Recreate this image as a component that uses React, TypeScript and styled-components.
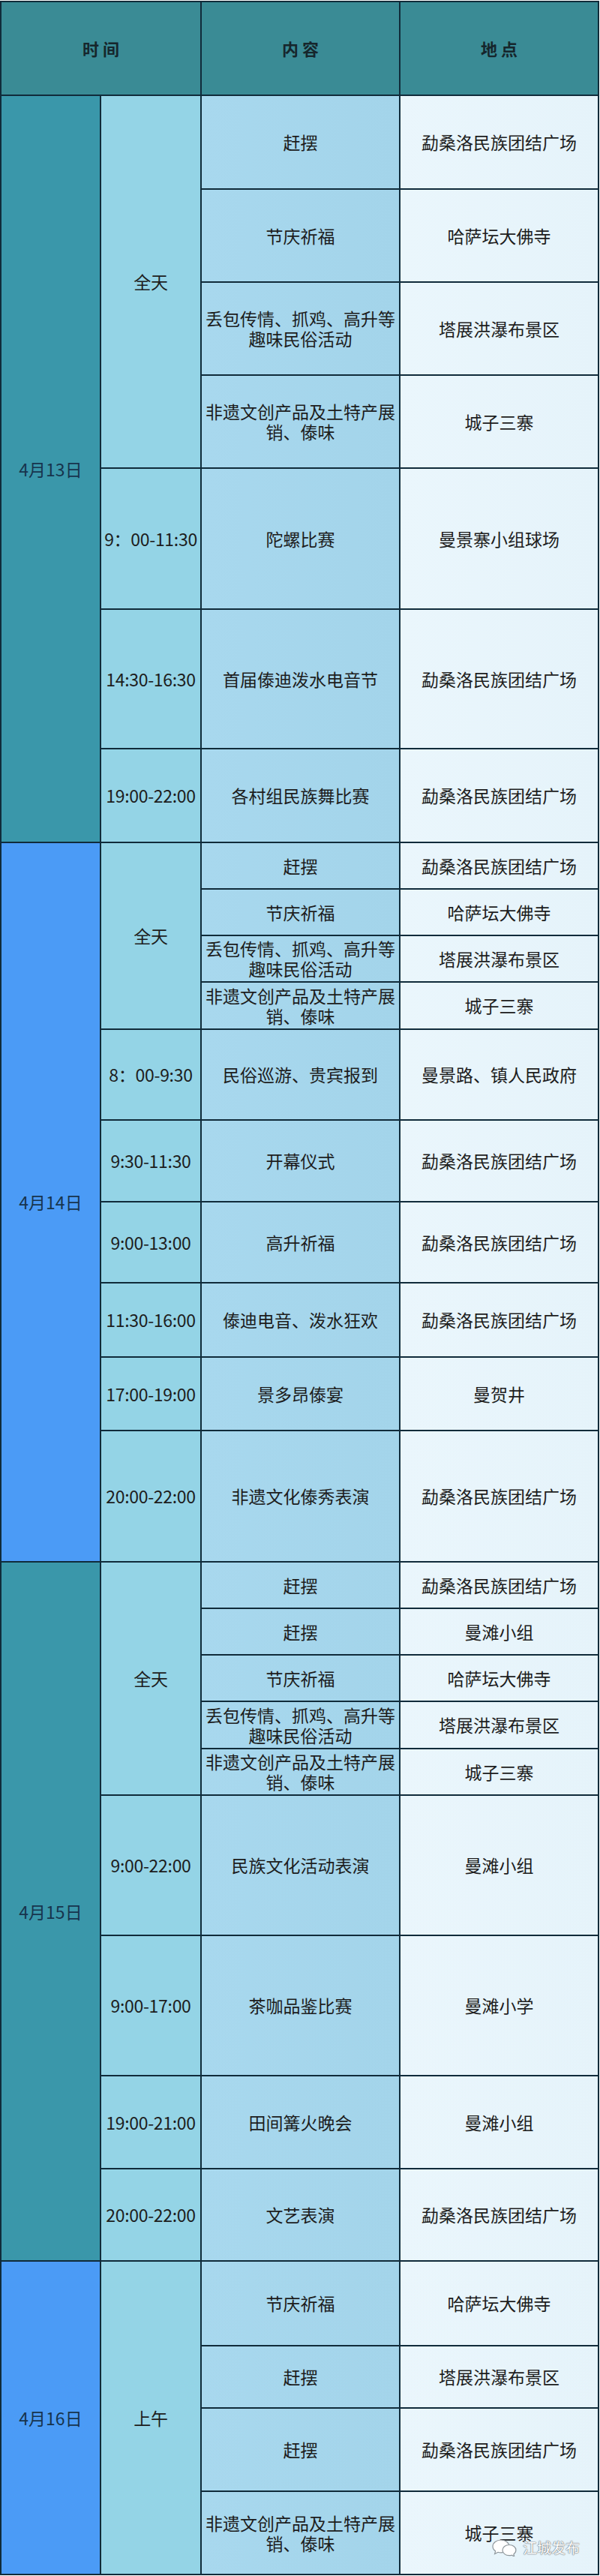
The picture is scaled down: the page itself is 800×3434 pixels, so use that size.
import React from "react";
import styled, { createGlobalStyle } from "styled-components";

const GlobalStyle = createGlobalStyle`
  html, body {
    margin: 0;
    padding: 0;
    background: #ffffff;
  }
  body {
    font-family: "Noto Sans CJK SC", "Noto Sans", sans-serif;
  }
`;

type Row = { content: string; place: string; h: number };
type Slot = { time: string; rows: Row[] };
type Section = { date: string; tone: "teal" | "blue"; slots: Slot[] };

const FEI_YI = "非遗文创产品及土特产展\n销、傣味";
const DIU_BAO = "丢包传情、抓鸡、高升等\n趣味民俗活动";
const MENG = "勐桑洛民族团结广场";

const sections: Section[] = [
  {
    date: "4月13日",
    tone: "teal",
    slots: [
      {
        time: "全天",
        rows: [
          { content: "赶摆", place: MENG, h: 125 },
          { content: "节庆祈福", place: "哈萨坛大佛寺", h: 124 },
          { content: DIU_BAO, place: "塔展洪瀑布景区", h: 124 },
          { content: FEI_YI, place: "城子三寨", h: 124 },
        ],
      },
      { time: "9：00-11:30", rows: [{ content: "陀螺比赛", place: "曼景寨小组球场", h: 188 }] },
      { time: "14:30-16:30", rows: [{ content: "首届傣迪泼水电音节", place: MENG, h: 186 }] },
      { time: "19:00-22:00", rows: [{ content: "各村组民族舞比赛", place: MENG, h: 125 }] },
    ],
  },
  {
    date: "4月14日",
    tone: "blue",
    slots: [
      {
        time: "全天",
        rows: [
          { content: "赶摆", place: MENG, h: 62 },
          { content: "节庆祈福", place: "哈萨坛大佛寺", h: 62 },
          { content: DIU_BAO, place: "塔展洪瀑布景区", h: 62 },
          { content: FEI_YI, place: "城子三寨", h: 63 },
        ],
      },
      { time: "8：00-9:30", rows: [{ content: "民俗巡游、贵宾报到", place: "曼景路、镇人民政府", h: 121 }] },
      { time: "9:30-11:30", rows: [{ content: "开幕仪式", place: MENG, h: 109 }] },
      { time: "9:00-13:00", rows: [{ content: "高升祈福", place: MENG, h: 108 }] },
      { time: "11:30-16:00", rows: [{ content: "傣迪电音、泼水狂欢", place: MENG, h: 99 }] },
      { time: "17:00-19:00", rows: [{ content: "景多昂傣宴", place: "曼贺井", h: 98 }] },
      { time: "20:00-22:00", rows: [{ content: "非遗文化傣秀表演", place: MENG, h: 175 }] },
    ],
  },
  {
    date: "4月15日",
    tone: "teal",
    slots: [
      {
        time: "全天",
        rows: [
          { content: "赶摆", place: MENG, h: 62 },
          { content: "赶摆", place: "曼滩小组", h: 62 },
          { content: "节庆祈福", place: "哈萨坛大佛寺", h: 62 },
          { content: DIU_BAO, place: "塔展洪瀑布景区", h: 63 },
          { content: FEI_YI, place: "城子三寨", h: 62 },
        ],
      },
      { time: "9:00-22:00", rows: [{ content: "民族文化活动表演", place: "曼滩小组", h: 187 }] },
      { time: "9:00-17:00", rows: [{ content: "茶咖品鉴比赛", place: "曼滩小学", h: 187 }] },
      { time: "19:00-21:00", rows: [{ content: "田间篝火晚会", place: "曼滩小组", h: 124 }] },
      { time: "20:00-22:00", rows: [{ content: "文艺表演", place: MENG, h: 123 }] },
    ],
  },
  {
    date: "4月16日",
    tone: "blue",
    slots: [
      {
        time: "上午",
        rows: [
          { content: "节庆祈福", place: "哈萨坛大佛寺", h: 113 },
          { content: "赶摆", place: "塔展洪瀑布景区", h: 83 },
          { content: "赶摆", place: MENG, h: 111 },
          { content: FEI_YI, place: "城子三寨", h: 111 },
        ],
      },
    ],
  },
];

const LINE = 2;
const HEADER_H = 125;

const COLORS = {
  header: "#3a8b95",
  teal: "#3a97aa",
  blue: "#4b9bf6",
  time: "#94d4e6",
};

const Wrapper = styled.div`
  position: relative;
  width: 799px;
  margin-top: 1px;
`;

const Table = styled.div<{ $rows: string }>`
  display: grid;
  grid-template-columns: 131px 132px 263px 263px;
  grid-template-rows: ${(p) => p.$rows};
  gap: ${LINE}px;
  padding: ${LINE}px;
  background: #102b3a;
`;

const Cell = styled.div<{ $row: number; $span?: number; $col: number; $colSpan?: number }>`
  grid-column: ${(p) => p.$col} / span ${(p) => p.$colSpan ?? 1};
  grid-row: ${(p) => p.$row} / span ${(p) => p.$span ?? 1};
  display: flex;
  align-items: center;
  justify-content: center;
  text-align: center;
  color: #1d1d1d;
  font-size: 23px;
  line-height: 27px;
  white-space: pre-line;
  overflow: hidden;
`;

const HeaderCell = styled(Cell)`
  background: ${COLORS.header};
  font-weight: 700;
  font-size: 22px;
  color: #16262c;
`;

const DateCell = styled(Cell)<{ $tone: "teal" | "blue" }>`
  background: ${(p) => COLORS[p.$tone]};
  color: #17344d;
`;

const TimeCell = styled(Cell)`
  background: ${COLORS.time};
  white-space: nowrap;
  letter-spacing: -0.3px;
`;

const ContentCell = styled(Cell)`
  background: linear-gradient(90deg, #a8d8ee 0%, #a3d4ea 100%);
`;

const PlaceCell = styled(Cell)`
  background: linear-gradient(90deg, #eaf6fc 0%, #e5f3fa 100%);
`;

const Watermark = styled.div`
  position: absolute;
  right: 26px;
  bottom: 24px;
  display: flex;
  align-items: center;
  gap: 6px;
  font-size: 19px;
  color: #ffffff;
  text-shadow: 0 0 1px #6d7479, 0 0 1px #6d7479, 0 0 2px #8a9094;
`;

function WeChatIcon() {
  return (
    <svg width="36" height="24" viewBox="0 0 36 24">
      <g fill="#ffffff" stroke="#8e969b" strokeWidth="1.2">
        <path d="M13 2c-6 0-11 3.8-11 8.5 0 2.6 1.4 4.8 3.6 6.3L4.6 20.6l4.4-2.3c1.3.4 2.6.6 4 .6 6 0 11-3.8 11-8.4S19 2 13 2z" />
        <path d="M24 8.5c-5 0-9 3.2-9 7.1s4 7.1 9 7.1c1.1 0 2.2-.2 3.2-.5l3.6 1.8-.9-3.1c1.8-1.3 3-3.2 3-5.3 0-3.9-4-7.1-8.9-7.1z" />
      </g>
    </svg>
  );
}

export default function App() {
  const heights: number[] = [HEADER_H - LINE];
  const cells: React.ReactNode[] = [
    <HeaderCell key="h1" $row={1} $col={1} $colSpan={2}>
      时 间
    </HeaderCell>,
    <HeaderCell key="h2" $row={1} $col={3}>
      内 容
    </HeaderCell>,
    <HeaderCell key="h3" $row={1} $col={4}>
      地 点
    </HeaderCell>,
  ];
  let row = 2;

  sections.forEach((sec, si) => {
    const total = sec.slots.reduce((n, s) => n + s.rows.length, 0);
    cells.push(
      <DateCell key={`d${si}`} $row={row} $span={total} $col={1} $tone={sec.tone}>
        {sec.date}
      </DateCell>
    );
    sec.slots.forEach((slot, ti) => {
      cells.push(
        <TimeCell key={`t${si}-${ti}`} $row={row} $span={slot.rows.length} $col={2}>
          {slot.time}
        </TimeCell>
      );
      slot.rows.forEach((r, ri) => {
        heights.push(r.h - LINE);
        cells.push(
          <ContentCell key={`c${si}-${ti}-${ri}`} $row={row} $col={3}>
            {r.content}
          </ContentCell>
        );
        cells.push(
          <PlaceCell key={`p${si}-${ti}-${ri}`} $row={row} $col={4}>
            {r.place}
          </PlaceCell>
        );
        row += 1;
      });
    });
  });

  return (
    <>
      <GlobalStyle />
      <Wrapper>
        <Table $rows={heights.map((h) => `${h}px`).join(" ")}>{cells}</Table>
        <Watermark>
          <WeChatIcon />
          <span>江城发布</span>
        </Watermark>
      </Wrapper>
    </>
  );
}
